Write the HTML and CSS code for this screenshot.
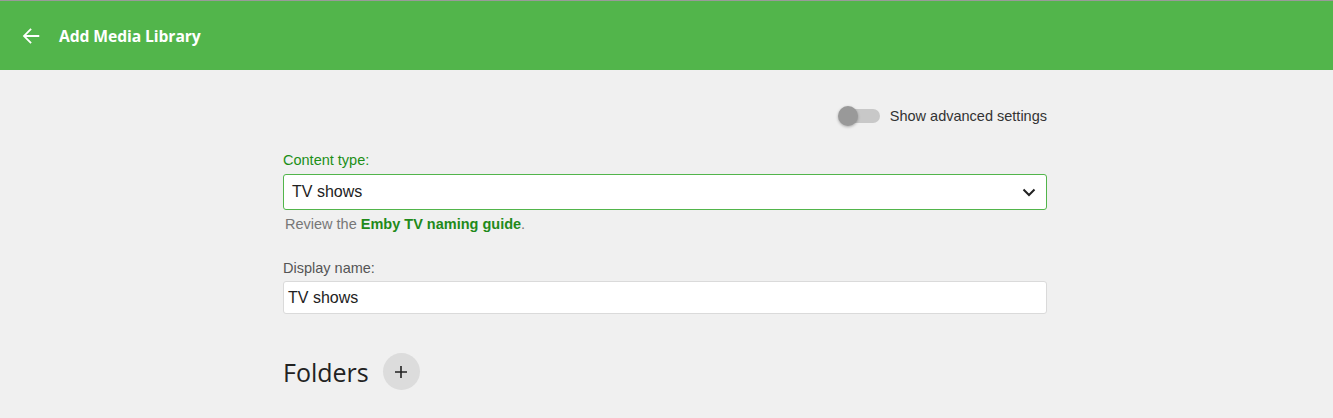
FILE: index.html
```html
<!DOCTYPE html>
<html>
<head>
<meta charset="utf-8">
<link rel="stylesheet" href="styles.css">
</head>
<body>
<header class="topbar">
  <button class="back" aria-label="Back">
    <svg width="22" height="22" viewBox="0 0 24 24"><path d="M21 11H6.8l6-6L11.4 3.6 3 12l8.4 8.4 1.4-1.4-6-6H21v-2z" fill="#fff"/></svg>
  </button>
  <h1 class="title">Add Media Library</h1>
</header>
<main class="content">
  <div class="advanced">
    <span class="toggle"><span class="knob"></span></span>
    <span class="advanced-label">Show advanced settings</span>
  </div>
  <div class="field">
    <label class="label label-active">Content type:</label>
    <div class="select">
      <span>TV shows</span>
      <svg class="chev" width="14" height="9" viewBox="0 0 14 9"><path d="M1.5 1.5 7 7l5.5-5.5" fill="none" stroke="#222" stroke-width="2"/></svg>
    </div>
    <div class="help">Review the <a class="link">Emby TV naming guide</a>.</div>
  </div>
  <div class="field field-name">
    <label class="label">Display name:</label>
    <div class="input">TV shows</div>
  </div>
  <div class="folders">
    <h2 class="folders-title">Folders</h2>
    <button class="add" aria-label="Add">
      <svg width="14" height="14" viewBox="0 0 14 14"><path d="M7 1v12M1 7h12" stroke="#222" stroke-width="1.6"/></svg>
    </button>
  </div>
</main>
</body>
</html>
```
FILE: styles.css
```css
html, body {
  margin: 0;
  padding: 0;
  background: #f0f0f0;
  font-family: "Liberation Sans", Arial, sans-serif;
}
.topbar {
  border-top: 1px solid #9a9a9a;
  height: 69px;
  background: #52b54b;
  display: flex;
  align-items: center;
  padding-left: 20px;
}
.back {
  background: none;
  border: 0;
  padding: 0;
  width: 22px;
  height: 22px;
  display: flex;
  align-items: center;
  justify-content: center;
  margin-right: 17px;
}
.title {
  margin: 0;
  color: #fff;
  font-family: "Open Sans", sans-serif;
  font-weight: 700;
  font-size: 15.7px;
  letter-spacing: -0.1px;
}
.content {
  width: 764px;
  padding-right: 3px;
  margin: 0 auto;
  padding-top: 36px;
}
.advanced {
  display: flex;
  justify-content: flex-end;
  align-items: center;
  height: 20px;
}
.toggle {
  position: relative;
  width: 36px;
  height: 14px;
  border-radius: 7px;
  background: #c8c8c8;
  margin-right: 10px;
  margin-left: 6px;
}
.knob {
  position: absolute;
  left: -6px;
  top: -3px;
  width: 20px;
  height: 20px;
  border-radius: 50%;
  background: #999;
  box-shadow: 0 1px 3px rgba(0,0,0,0.3);
}
.advanced-label {
  font-size: 14.5px;
  color: #333;
}
.field {
  margin-top: 26px;
}
.label {
  display: block;
  font-size: 14.5px;
  color: #555;
  line-height: 16px;
  margin-bottom: 6px;
}
.label-active {
  color: #1c8f17;
}
.select {
  box-sizing: border-box;
  height: 36px;
  background: #fff;
  border: 1px solid #52b54b;
  border-radius: 3px;
  display: flex;
  align-items: center;
  justify-content: space-between;
  padding: 0 10px 0 8px;
  font-size: 16px;
  color: #222;
}
.chev {
  margin-top: 1px;
}
.help {
  margin-top: 6px;
  font-size: 14.5px;
  color: #777;
  padding-left: 2px;
}
.link {
  color: #1f8a1a;
  font-weight: 700;
}
.field-name {
  margin-top: 28px;
}
.field-name .label {
  margin-bottom: 5px;
}
.input {
  box-sizing: border-box;
  height: 33px;
  background: #fff;
  border: 1px solid #dadada;
  border-radius: 3px;
  display: flex;
  align-items: center;
  padding-left: 4px;
  font-size: 16px;
  color: #222;
}
.folders {
  display: flex;
  align-items: center;
  margin-top: 39px;
}
.folders-title {
  margin: 0;
  font-family: "Open Sans", sans-serif;
  font-weight: 400;
  font-size: 25px;
  color: #222;
  margin-right: 14px;
}
.add {
  width: 37px;
  height: 37px;
  border-radius: 50%;
  border: 0;
  background: #dcdcdc;
  display: flex;
  align-items: center;
  justify-content: center;
  padding: 0;
}
```
